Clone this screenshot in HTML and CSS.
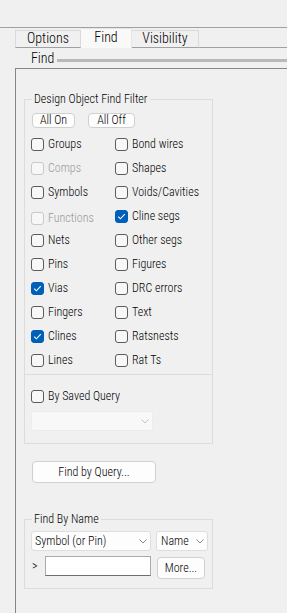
FILE: index.html
```html
<!DOCTYPE html>
<html>
<head>
<meta charset="utf-8">
<link rel="stylesheet" href="styles.css">
</head>
<body>
<div class="top"></div>
<div class="tabs">
  <div class="tab t-options">Options</div>
  <div class="tab sel t-find">Find</div>
  <div class="tab t-vis">Visibility</div>
  <div class="tabfill"></div>
</div>
<div class="pagehead"><span class="pagetitle">Find</span><div class="bar"></div></div>
<div class="panel">
  <fieldset class="group filter">
    <legend>Design Object Find Filter</legend>
    <div class="btnrow">
      <button class="btn small b-on">All On</button>
      <button class="btn small b-off">All Off</button>
    </div>
    <div class="grid">
      <label class="cb"><span class="box"></span>Groups</label>
      <label class="cb"><span class="box"></span>Bond wires</label>
      <label class="cb dis"><span class="box"></span>Comps</label>
      <label class="cb"><span class="box"></span>Shapes</label>
      <label class="cb"><span class="box"></span>Symbols</label>
      <label class="cb"><span class="box"></span>Voids/Cavities</label>
      <label class="cb dis low"><span class="box"></span>Functions</label>
      <label class="cb on"><span class="box"><svg viewBox="0 0 13 13" width="13" height="13"><path d="M3.2 6.6 L5.4 8.8 L9.8 4.2" fill="none" stroke="#fff" stroke-width="1.1"/></svg></span>Cline segs</label>
      <label class="cb"><span class="box"></span>Nets</label>
      <label class="cb"><span class="box"></span>Other segs</label>
      <label class="cb"><span class="box"></span>Pins</label>
      <label class="cb"><span class="box"></span>Figures</label>
      <label class="cb on"><span class="box"><svg viewBox="0 0 13 13" width="13" height="13"><path d="M3.2 6.6 L5.4 8.8 L9.8 4.2" fill="none" stroke="#fff" stroke-width="1.1"/></svg></span>Vias</label>
      <label class="cb"><span class="box"></span>DRC errors</label>
      <label class="cb"><span class="box"></span>Fingers</label>
      <label class="cb"><span class="box"></span>Text</label>
      <label class="cb on"><span class="box"><svg viewBox="0 0 13 13" width="13" height="13"><path d="M3.2 6.6 L5.4 8.8 L9.8 4.2" fill="none" stroke="#fff" stroke-width="1.1"/></svg></span>Clines</label>
      <label class="cb"><span class="box"></span>Ratsnests</label>
      <label class="cb"><span class="box"></span>Lines</label>
      <label class="cb"><span class="box"></span>Rat Ts</label>
    </div>
    <div class="divider"></div>
    <label class="cb saved"><span class="box"></span>By Saved Query</label>
    <div class="select disabled q-select"><span></span><svg width="8" height="5" viewBox="0 0 8 5"><path d="M0.5 0.5 L4 4 L7.5 0.5" fill="none" stroke="#c4c4c4" stroke-width="1"/></svg></div>
  </fieldset>

  <button class="btn query">Find by Query...</button>

  <fieldset class="group byname">
    <legend>Find By Name</legend>
    <div class="namerow">
      <div class="select s-type"><span>Symbol (or Pin)</span><svg width="8" height="5" viewBox="0 0 8 5"><path d="M0.5 0.5 L4 4 L7.5 0.5" fill="none" stroke="#8a8a8a" stroke-width="1"/></svg></div>
      <div class="select s-name"><span>Name</span><svg width="8" height="5" viewBox="0 0 8 5"><path d="M0.5 0.5 L4 4 L7.5 0.5" fill="none" stroke="#8a8a8a" stroke-width="1"/></svg></div>
    </div>
    <div class="inputrow">
      <span class="prompt">&gt;</span>
      <div class="textbox"></div>
      <button class="btn more">More...</button>
    </div>
  </fieldset>
</div>
</body>
</html>
```
FILE: styles.css
```css
html, body {
  margin: 0;
  padding: 0;
  background: #f0f0f0;
  font-family: "Roboto Condensed", "Liberation Sans", sans-serif;
  font-weight: 300;
  color: #000;
  font-size: 12px;
}

.top {
  height: 27px;
  border-bottom: 1px solid #a0a0a0;
}

/* tabs */
.tabs {
  display: flex;
  height: 20px;
  margin-left: 15px;
}
.tab {
  box-sizing: border-box;
  height: 18px;
  margin-top: 2px;
  border: 1px solid #dadada;
  border-bottom: 1px solid #a0a0a0;
  font-size: 14px;
  line-height: 15px;
  text-align: center;
}
.t-options { width: 66px; }
.t-vis { width: 67px; border-left: none; }
.tab.sel {
  height: 20px;
  margin-top: 0;
  width: 51px;
  background: #f9f9f9;
  border: 1px solid #e6e6e6;
  border-bottom: none;
  line-height: 16px;
  border-left: none;
}
.tabfill {
  flex: 1;
  border-bottom: 1px solid #a0a0a0;
}

/* page heading */
.pagehead {
  display: flex;
  height: 20px;
  padding-left: 31px;
}
.pagetitle {
  font-size: 14px;
  line-height: 16px;
  margin-top: 2px;
}
.bar {
  flex: 1;
  height: 3px;
  margin-top: 11px;
  margin-left: 3px;
  background: #b9b9b9;
}

/* panel */
.panel {
  box-sizing: border-box;
  margin-left: 15px;
  min-height: calc(100vh - 68px);
  border-top: 1px solid #83878d;
  border-left: 1px solid #83878d;
  overflow: hidden;
}

/* group boxes */
.group {
  box-sizing: border-box;
  width: 189px;
  margin: 0 0 0 8px;
  border: 1px solid #dcdcdc;
  padding: 0;
  min-width: 0;
}
.group legend {
  font-size: 12px;
  line-height: 14px;
  margin-left: 7px;
  padding: 0 2px;
}
.filter {
  margin-top: 23px;
  padding-bottom: 12px;
}

/* buttons */
.btn {
  box-sizing: border-box;
  display: block;
  font-family: inherit;
  font-weight: inherit;
  font-size: 12px;
  color: #000;
  background: #fdfdfd;
  border: 1px solid #d0d0d0;
  border-radius: 4px;
  padding: 0;
  margin: 0;
}
.btnrow {
  display: flex;
  margin-top: 7px;
  margin-left: 7px;
  gap: 13px;
}
.btn.small {
  height: 15px;
  line-height: 13px;
}
.b-on { width: 43px; }
.b-off { width: 47px; }

/* checkbox grid */
.grid {
  display: grid;
  grid-template-columns: 84px 1fr;
  row-gap: 11px;
  margin-top: 10px;
  padding-left: 6px;
}
.cb {
  display: flex;
  align-items: center;
  gap: 4px;
  height: 13px;
  line-height: 13px;
  white-space: nowrap;
}
.box {
  box-sizing: border-box;
  display: block;
  width: 13px;
  height: 13px;
  border: 1px solid #5b5b5b;
  border-radius: 3px;
  background: #f7f7f7;
  flex: none;
}
.box svg {
  display: block;
  margin: -1px;
}
.cb.on .box {
  background: #005fb8;
  border-color: #005fb8;
}
.cb.dis {
  color: #999;
}
.cb.dis .box {
  border-color: #c9c9c9;
  background: #f7f7f7;
}
.cb.low {
  margin-top: 2px;
  margin-bottom: -2px;
}

.divider {
  height: 1px;
  background: #dcdcdc;
  margin-top: 7px;
}
.saved {
  margin-top: 15px;
  margin-left: 6px;
}

/* selects */
.select {
  box-sizing: border-box;
  display: flex;
  align-items: center;
  justify-content: space-between;
  height: 20px;
  background: #fdfdfd;
  border: 1px solid #dedede;
  border-radius: 3px;
  padding: 0 3px 0 3px;
  line-height: 18px;
  white-space: nowrap;
}
.select svg { display: block; flex: none; }
.select.disabled {
  background: #f8f8f8;
  border-color: #ececec;
}
.q-select {
  width: 122px;
  margin-top: 8px;
  margin-left: 6px;
}

.query {
  width: 124px;
  height: 22px;
  margin-top: 17px;
  margin-left: 16px;
  line-height: 20px;
}

.byname {
  margin-top: 29px;
  padding-bottom: 10px;
}
.namerow {
  display: flex;
  gap: 5px;
  margin-top: 5px;
  margin-left: 6px;
}
.s-type { width: 120px; }
.s-name { width: 52px; padding-left: 4px; }

.inputrow {
  display: flex;
  align-items: flex-start;
  margin-top: 5px;
  margin-left: 6px;
  height: 22px;
}
.prompt {
  width: 14px;
  line-height: 20px;
  padding-left: 1px;
  box-sizing: border-box;
}
.textbox {
  box-sizing: border-box;
  width: 106px;
  height: 20px;
  background: #fff;
  border: 1px solid #ababab;
  border-bottom-color: #6e6e6e;
}
.more {
  width: 48px;
  height: 22px;
  margin-top: 1px;
  margin-left: 6px;
  line-height: 20px;
}
```
